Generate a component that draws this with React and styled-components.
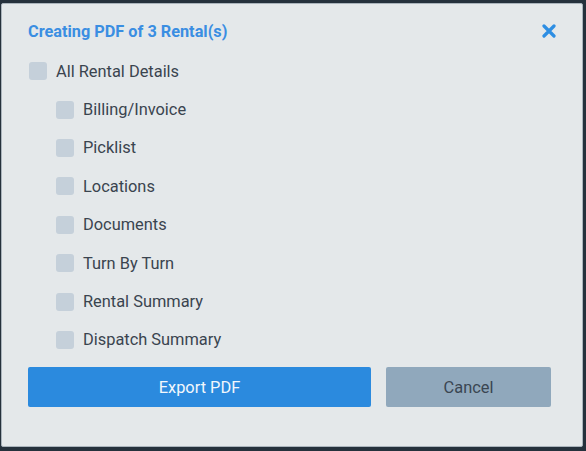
import React, { useState } from "react";
import styled, { createGlobalStyle } from "styled-components";

const GlobalStyle = createGlobalStyle`
  html, body {
    margin: 0;
    padding: 0;
    background: #25313c;
  }
  body {
    font-family: Roboto, "Liberation Sans", Arial, sans-serif;
  }
`;

const OPTIONS = [
    "Billing/Invoice",
    "Picklist",
    "Locations",
    "Documents",
    "Turn By Turn",
    "Rental Summary",
    "Dispatch Summary",
];

function Checkbox({ label, checked, onChange, nested }) {
    return (
        <Row $nested={nested} onClick={onChange}>
            <Box $checked={checked} />
            <Label>{label}</Label>
        </Row>
    );
}

function App() {
    const [checked, setChecked] = useState({});
    const toggle = (key) => setChecked((c) => ({ ...c, [key]: !c[key] }));

    return (
        <>
            <GlobalStyle />
            <Frame>
                <Dialog>
                    <Header>
                        <Title>Creating PDF of 3 Rental(s)</Title>
                        <Close aria-label="close">
                            <svg width="14" height="14" viewBox="0 0 14 14">
                                <path
                                    d="M2 2 L12 12 M12 2 L2 12"
                                    stroke="#2d8ee3"
                                    strokeWidth="3.2"
                                    strokeLinecap="round"
                                />
                            </svg>
                        </Close>
                    </Header>
                    <List>
                        <Checkbox
                            label="All Rental Details"
                            checked={checked.all}
                            onChange={() => toggle("all")}
                        />
                        {OPTIONS.map((opt) => (
                            <Checkbox
                                key={opt}
                                label={opt}
                                nested
                                checked={checked[opt]}
                                onChange={() => toggle(opt)}
                            />
                        ))}
                    </List>
                    <Actions>
                        <Button $primary>Export PDF</Button>
                        <Button>Cancel</Button>
                    </Actions>
                </Dialog>
            </Frame>
        </>
    );
}

const Frame = styled.div`
    width: 586px;
    height: 451px;
    padding: 3px 3px 4px 1px;
    box-sizing: border-box;
`;

const Dialog = styled.div`
    height: 100%;
    box-sizing: border-box;
    background: #e4e8ea;
    border: 1px solid #aab4bc;
    border-radius: 2px;
    padding: 15px 31px 0 26px;
    display: flex;
    flex-direction: column;
`;

const Header = styled.div`
    display: flex;
    align-items: center;
    justify-content: space-between;
    height: 24px;
`;

const Title = styled.h2`
    margin: 0;
    font-size: 16.3px;
    font-weight: 700;
    color: #3a8ee2;
`;

const Close = styled.button`
    border: none;
    background: none;
    padding: 0;
    display: flex;
    cursor: pointer;
    margin-right: -5px;
`;

const List = styled.div`
    display: flex;
    flex-direction: column;
    margin-top: 9px;
`;

const Row = styled.label`
    display: flex;
    align-items: center;
    gap: 9px;
    height: 38.4px;
    padding-left: ${(p) => (p.$nested ? "28px" : "1px")};
    cursor: pointer;
`;

const Box = styled.span`
    width: 18px;
    height: 18px;
    border-radius: 3px;
    background: ${(p) => (p.$checked ? "#2d8ae0" : "#c5d0da")};
    flex-shrink: 0;
`;

const Label = styled.span`
    font-size: 16.4px;
    color: #3a444f;
`;

const Actions = styled.div`
    display: grid;
    grid-template-columns: 343px 165px;
    gap: 15px;
    margin-top: 8px;
`;

const Button = styled.button`
    height: 40px;
    border: none;
    border-radius: 2px;
    font-family: inherit;
    font-size: 16.4px;
    cursor: pointer;
    background: ${(p) => (p.$primary ? "#2b8ade" : "#90a8bc")};
    color: ${(p) => (p.$primary ? "#f2f7fc" : "#3a4652")};
`;

export default App;
